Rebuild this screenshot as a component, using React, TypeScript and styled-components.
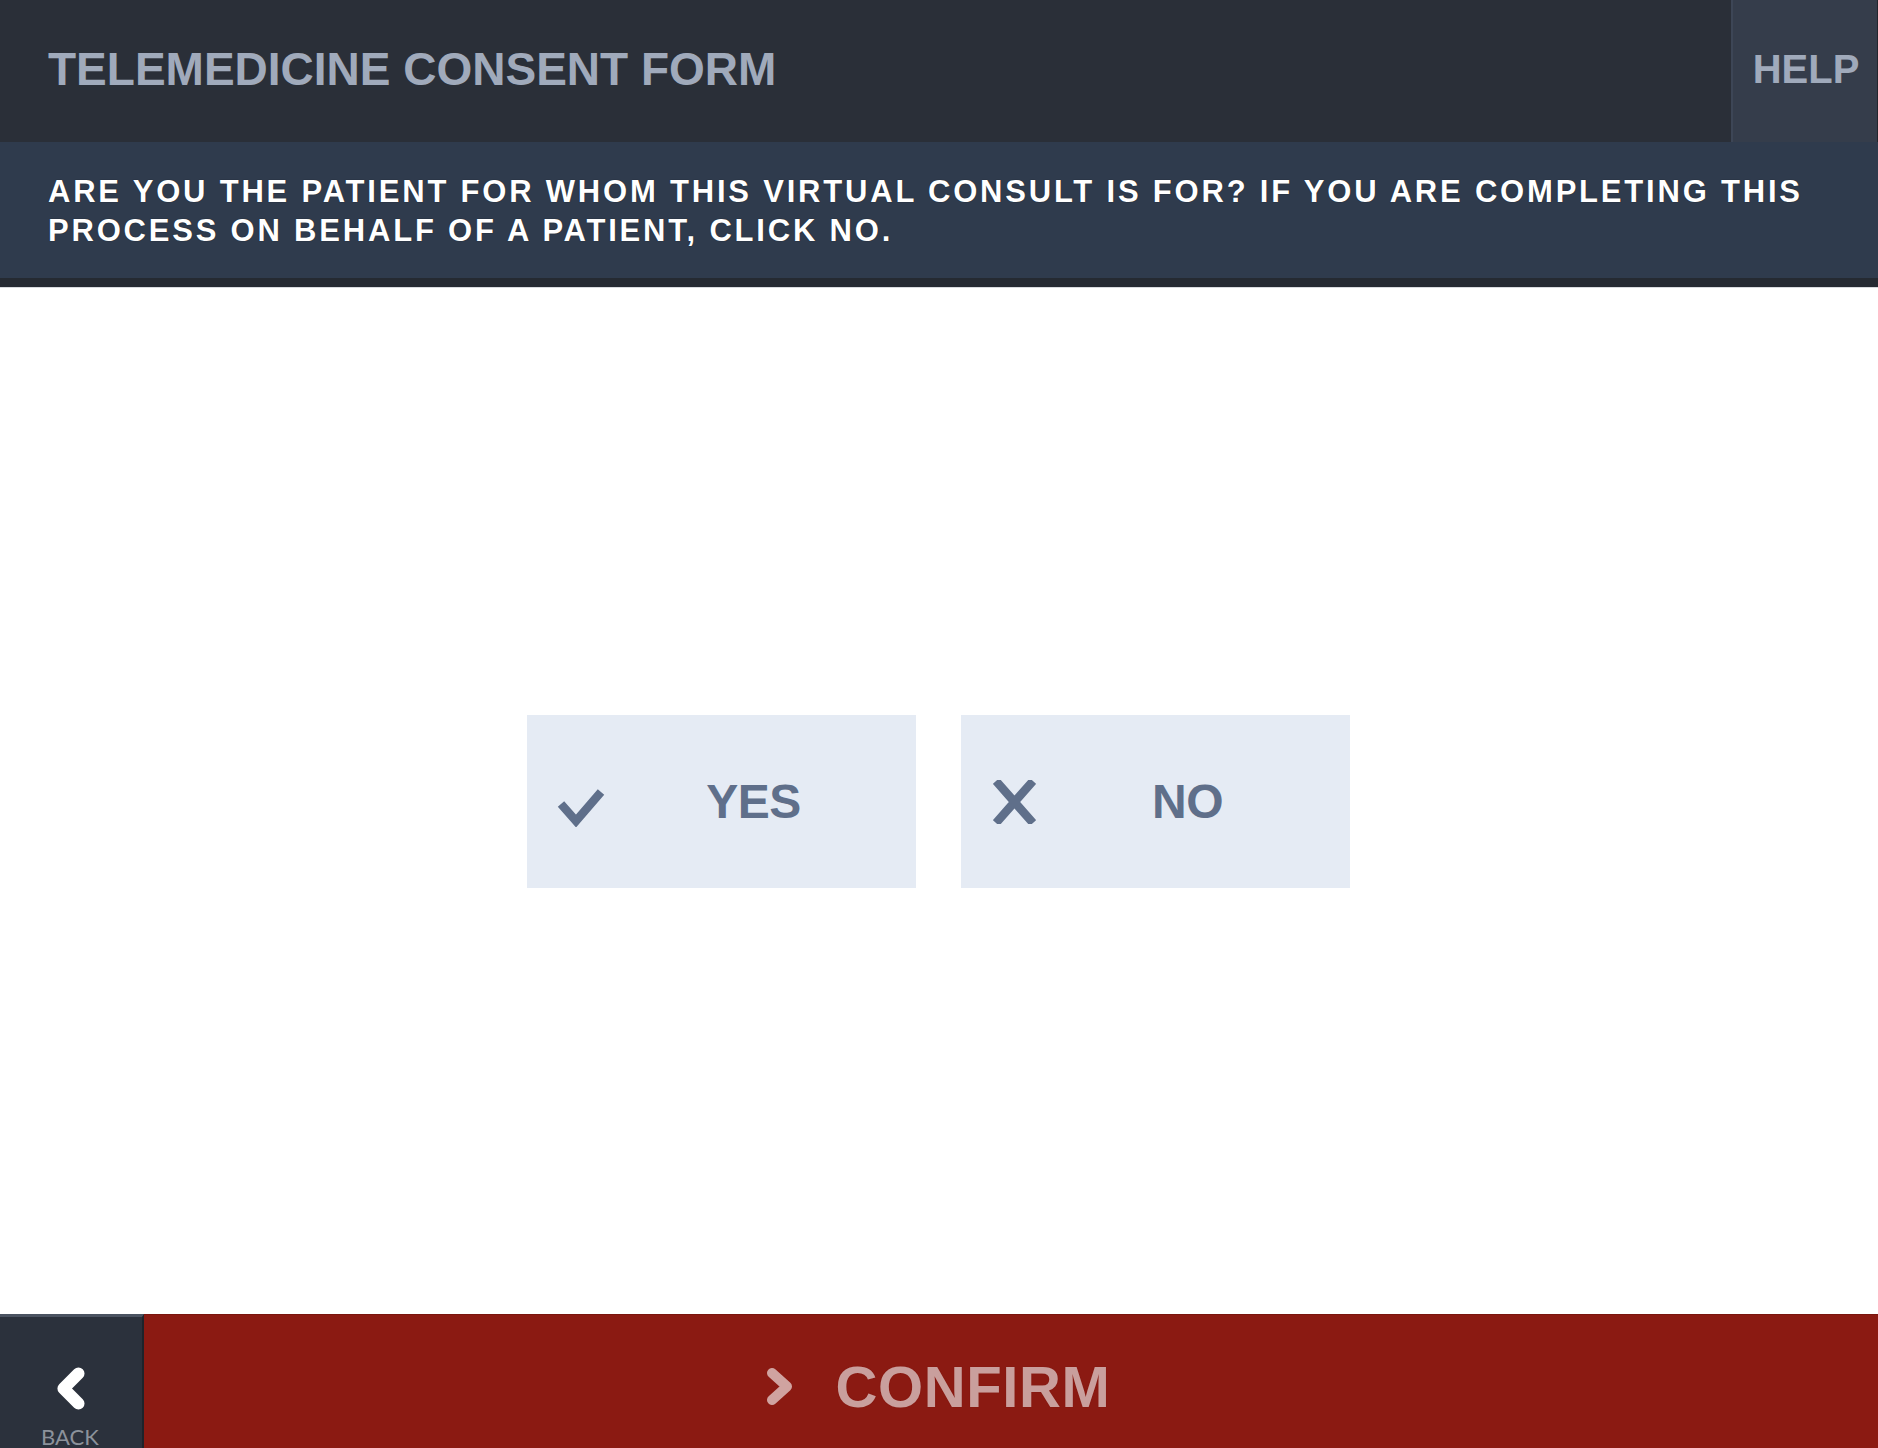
import React from "react";
import styled, { createGlobalStyle } from "styled-components";

const Global = createGlobalStyle`
  html, body { margin: 0; padding: 0; background: #ffffff; }
  body { font-family: "Liberation Sans", Arial, sans-serif; }
  * { box-sizing: border-box; }
`;

const Page = styled.div`
  width: 1878px;
  height: 1448px;
  display: flex;
  flex-direction: column;
  overflow: hidden;
`;

const Header = styled.header`
  height: 142px;
  display: flex;
  background: #2a2f38;
`;

const Title = styled.h1`
  flex: 1;
  margin: 0;
  padding: 0 0 4px 48px;
  display: flex;
  align-items: center;
  font-size: 46px;
  font-weight: 700;
  letter-spacing: 0;
  color: #a0aabb;
`;

const HelpButton = styled.div`
  width: 147px;
  display: flex;
  align-items: center;
  justify-content: center;
  padding: 0 0 4px 2px;
  background: #353d4b;
  border-left: 2px solid #3d4656;
  border-right: 1px solid #22262d;
  font-size: 40px;
  font-weight: 700;
  color: #a0aabb;
`;

const Question = styled.div`
  height: 145px;
  background: #2f3b4d;
  border-bottom: 9px solid #252a32;
  padding: 30px 30px 0 48px;
  font-size: 31px;
  line-height: 39px;
  font-weight: 700;
  letter-spacing: 2.8px;
  color: #ffffff;
  text-shadow: 0 0 1px rgba(0, 0, 0, 0.7);
`;

const Main = styled.main`
  flex: 1;
  display: flex;
  align-items: center;
  justify-content: center;
  gap: 45px;
  padding-right: 2px;
  background: #ffffff;
  border-top: 1px solid #d8dade;
`;

const Choice = styled.button`
  width: 389px;
  height: 173px;
  border: none;
  margin: 0;
  padding: 0 15px 0 28px;
  display: flex;
  align-items: center;
  background: #e5ebf4;
  color: #5f6f8a;
  font-family: "Liberation Sans", Arial, sans-serif;
  cursor: pointer;
`;

const ChoiceIcon = styled.span<{ $offset: number }>`
  width: 52px;
  display: flex;
  justify-content: center;
  margin-top: ${(p) => p.$offset}px;
`;

const ChoiceLabel = styled.span`
  flex: 1;
  text-align: center;
  font-size: 48px;
  font-weight: 700;
  letter-spacing: -0.5px;
`;

const Footer = styled.footer`
  height: 134px;
  display: flex;
`;

const BackButton = styled.div`
  width: 144px;
  display: flex;
  flex-direction: column;
  align-items: center;
  padding: 50px 2px 0 0;
  background: #2b313c;
  border-top: 3px solid #4b5361;
  border-right: 2px solid #1e232a;
`;

const BackLabel = styled.span`
  margin-top: 16px;
  font-family: Lato, "Open Sans", sans-serif;
  font-size: 22px;
  font-weight: 400;
  line-height: 22px;
  color: #8c929b;
`;

const ConfirmButton = styled.div`
  flex: 1;
  display: flex;
  align-items: center;
  justify-content: center;
  gap: 43px;
  padding: 10px 146px 0 0;
  background: #8b1a12;
  border-top: 1px solid #7a150e;
`;

const ConfirmLabel = styled.span`
  font-size: 58px;
  font-weight: 700;
  letter-spacing: 0.6px;
  color: rgba(255, 255, 255, 0.6);
  text-shadow: 0 0 1px rgba(110, 10, 5, 0.6);
`;

const CheckIcon = () => (
  <svg width="48" height="38" viewBox="0 0 48 38" aria-hidden>
    <polyline points="4,15 19,32 44,3" fill="none" stroke="#5f6f8a" strokeWidth="8.5" strokeLinejoin="miter" />
  </svg>
);

const CrossIcon = () => (
  <svg width="43" height="44" viewBox="0 0 43 44" aria-hidden>
    <path d="M3 1 L40 43 M40 1 L3 43" fill="none" stroke="#5f6f8a" strokeWidth="8.5" />
  </svg>
);

const BackChevron = () => (
  <svg width="31" height="46" viewBox="0 0 31 46" aria-hidden>
    <polyline points="24,7 8,23 24,39" fill="none" stroke="#ffffff" strokeWidth="13" strokeLinecap="round" strokeLinejoin="round" />
  </svg>
);

const ConfirmChevron = () => (
  <svg width="27" height="39" viewBox="0 0 27 39" aria-hidden>
    <polyline points="6,6 21,19.5 6,33" fill="none" stroke="rgba(255,255,255,0.6)" strokeWidth="10" strokeLinecap="round" strokeLinejoin="round" />
  </svg>
);

export default function App() {
  return (
    <Page>
      <Global />
      <Header>
        <Title>TELEMEDICINE CONSENT FORM</Title>
        <HelpButton>HELP</HelpButton>
      </Header>
      <Question>
        ARE YOU THE PATIENT FOR WHOM THIS VIRTUAL CONSULT IS FOR? IF YOU ARE COMPLETING THIS PROCESS ON BEHALF OF A PATIENT, CLICK NO.
      </Question>
      <Main>
        <Choice>
          <ChoiceIcon $offset={14}>
            <CheckIcon />
          </ChoiceIcon>
          <ChoiceLabel>YES</ChoiceLabel>
        </Choice>
        <Choice>
          <ChoiceIcon $offset={2}>
            <CrossIcon />
          </ChoiceIcon>
          <ChoiceLabel>NO</ChoiceLabel>
        </Choice>
      </Main>
      <Footer>
        <BackButton>
          <BackChevron />
          <BackLabel>BACK</BackLabel>
        </BackButton>
        <ConfirmButton>
          <ConfirmChevron />
          <ConfirmLabel>CONFIRM</ConfirmLabel>
        </ConfirmButton>
      </Footer>
    </Page>
  );
}
